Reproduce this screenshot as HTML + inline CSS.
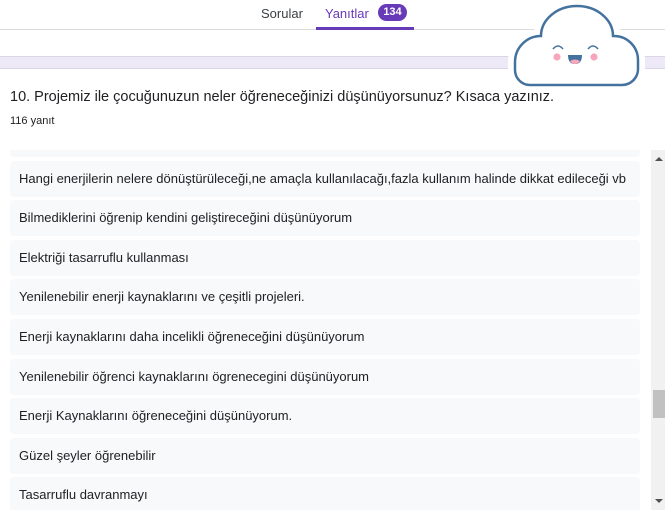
<!DOCTYPE html>
<html><head><style>
body{margin:0;width:665px;height:524px;overflow:hidden;background:#fff;font-family:"Liberation Sans",sans-serif;position:relative;color:#202124}
.tabs{position:absolute;top:0;left:0;width:665px;height:29px;border-bottom:1px solid #dadce0}
.tab{position:absolute;top:6px;font-size:13px}
.band{position:absolute;top:56px;left:0;width:665px;height:11px;background:#ede9f7;border-top:1px solid #dad6e6;border-bottom:1px solid #dad6e6}
.row{position:absolute;left:10px;width:630px;height:36px;background:#f8f9fa;border-radius:4px;font-size:13px;line-height:36px;padding-left:9px;box-sizing:border-box;white-space:nowrap;overflow:hidden}
</style></head><body>
<div class="tabs">
<div class="tab" style="left:261px;color:#3c4043">Sorular</div>
<div class="tab" style="left:325px;color:#673ab7">Yanıtlar</div>
<div style="position:absolute;left:378px;top:4px;width:29px;height:17px;border-radius:9px;background:#673ab7;color:#fff;font-size:11px;font-weight:bold;line-height:17px;text-align:center">134</div>
<div style="position:absolute;left:316px;top:27px;width:98px;height:3px;background:#673ab7"></div>
</div>
<div class="band"></div>
<svg style="position:absolute;left:0;top:0" width="665" height="100">
<path d="M530,85 H622 A16,16 0 0 0 638,69 V60 A24,24 0 0 0 613,36 A36,30 0 0 0 541,36 A26,26 0 0 0 515,62 V70 A15,15 0 0 0 530,85 Z" fill="#fff" stroke="#fff" stroke-width="14" stroke-linejoin="round"/>
<path d="M530,85 H622 A16,16 0 0 0 638,69 V60 A24,24 0 0 0 613,36 A36,30 0 0 0 541,36 A26,26 0 0 0 515,62 V70 A15,15 0 0 0 530,85 Z" fill="#fff" stroke="#44729e" stroke-width="2.5"/>
<path d="M553,49 Q558,43 563,49 M588,49 Q593,43 598,49" fill="none" stroke="#44729e" stroke-width="1.6"/>
<circle cx="557" cy="57" r="3.6" fill="#f7a6be"/><circle cx="594" cy="57" r="3.6" fill="#f7a6be"/>
<path d="M568,55 H582 Q582,64 575,64 Q568,64 568,55Z" fill="#44729e"/>
<path d="M570,61 Q575,58 580,61 Q578,64 575,64 Q572,64 570,61Z" fill="#f7a6be"/>
</svg>
<div style="position:absolute;left:10px;top:89px;font-size:14.5px">10. Projemiz ile çocuğunuzun neler öğreneceğinizi düşünüyorsunuz? Kısaca yazınız.</div>
<div style="position:absolute;left:10px;top:115px;font-size:11px">116 yanıt</div>
<div class="row" style="top:150px;height:7px;border-radius:0 0 4px 4px"></div>
<div class="row" style="top:161px">Hangi enerjilerin nelere dönüştürüleceği,ne amaçla kullanılacağı,fazla kullanım halinde dikkat edileceği vb</div>
<div class="row" style="top:200px">Bilmediklerini öğrenip kendini geliştireceğini düşünüyorum</div>
<div class="row" style="top:240px">Elektriği tasarruflu kullanması</div>
<div class="row" style="top:279px">Yenilenebilir enerji kaynaklarını ve çeşitli projeleri.</div>
<div class="row" style="top:319px">Enerji kaynaklarını daha incelikli öğreneceğini düşünüyorum</div>
<div class="row" style="top:359px">Yenilenebilir öğrenci kaynaklarını ögrenecegini düşünüyorum</div>
<div class="row" style="top:398px">Enerji Kaynaklarını öğreneceğini düşünüyorum.</div>
<div class="row" style="top:438px">Güzel şeyler öğrenebilir</div>
<div class="row" style="top:477px;height:33px;border-radius:4px 4px 0 0">Tasarruflu davranmayı</div>
<div style="position:absolute;left:0;top:510px;width:665px;height:14px;background:#fff"></div>
<div style="position:absolute;left:651px;top:150px;width:14px;height:360px;background:#f1f1f1"></div>
<div style="position:absolute;left:653px;top:390px;width:12px;height:28px;background:#c1c1c1"></div>
<div style="position:absolute;left:655px;top:157px;width:0;height:0;border-left:4px solid transparent;border-right:4px solid transparent;border-bottom:4px solid #505050"></div>
<div style="position:absolute;left:655px;top:499px;width:0;height:0;border-left:4px solid transparent;border-right:4px solid transparent;border-top:4px solid #505050"></div>
</body></html>
